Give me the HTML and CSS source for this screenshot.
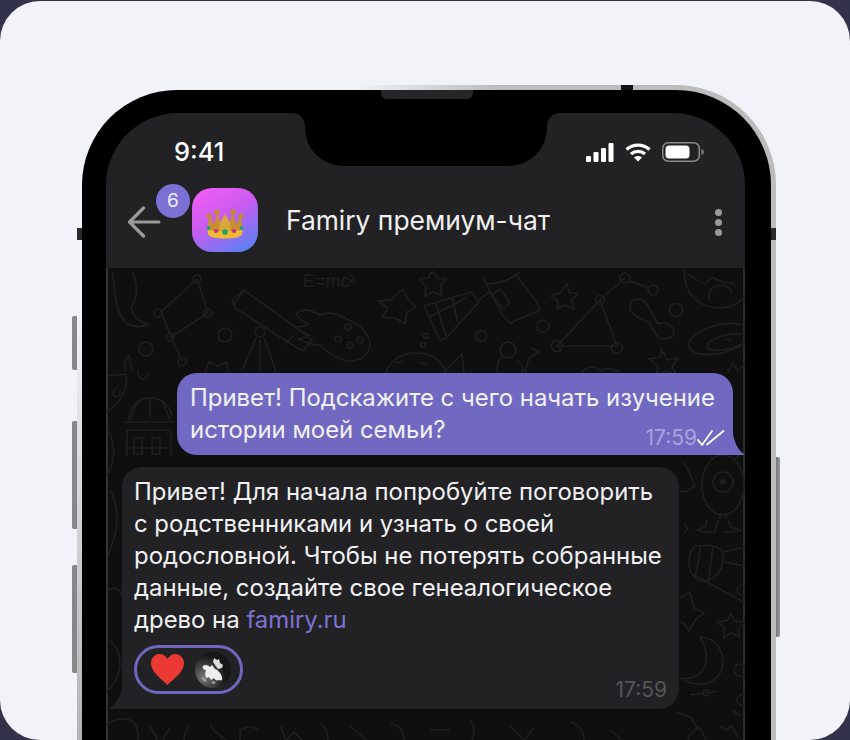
FILE: index.html
```html
<!DOCTYPE html>
<html>
<head>
	<meta charset="utf-8" />
	<title>Famiry</title>
	<link rel="stylesheet" href="styles.css">
</head>
<body>
	<div class="card">
		<div class="phone">
			<i class="tick tick_top"></i>
			<i class="tick tick_left"></i>
			<i class="tick tick_right"></i>
			<i class="side side_l1"></i>
			<i class="side side_l2"></i>
			<i class="side side_l3"></i>
			<i class="side side_r1"></i>
			<i class="speaker"></i>

			<div class="screen">
				<div class="notch"></div>

				<div class="status">
					<span class="clock">9:41</span>
					<div class="status_icons">
						<svg width="28" height="19" viewBox="0 0 28 19" fill="#fff">
							<rect x="0" y="13" width="5" height="6" rx="1.2"/>
							<rect x="7.5" y="9" width="5" height="10" rx="1.2"/>
							<rect x="15" y="5" width="5" height="14" rx="1.2"/>
							<rect x="22.5" y="0" width="5" height="19" rx="1.2"/>
						</svg>
						<svg width="26" height="19" viewBox="0 0 26 19" fill="none" stroke="#fff" stroke-width="3.200">
							<path d="M1.500 6.500C8 .6 18 .6 24.500 6.500"/>
							<path d="M6 11c4-3.600 10-3.600 14 0"/>
							<path d="M13 18.600l-4-4c2.300-2 5.700-2 8 0z" fill="#fff" stroke="none"/>
						</svg>
						<svg width="42" height="20" viewBox="0 0 42 20" fill="none">
							<rect x=".75" y=".75" width="36.500" height="18.500" rx="5.500" stroke="#8a8a8a" stroke-width="1.500"/>
							<rect x="3.500" y="3.500" width="24" height="13" rx="3.500" fill="#fff"/>
							<path d="M39.500 7c1.500.5 2.200 1.600 2.200 3s-.7 2.500-2.200 3z" fill="#8a8a8a"/>
						</svg>
					</div>
				</div>

				<div class="header">
					<svg class="back" width="34" height="32" viewBox="0 0 34 32" fill="none" stroke="#9a9a9a" stroke-width="3.200" stroke-linecap="round" stroke-linejoin="round">
						<path d="M32 16H3M16.500 2L2.500 16l14 14"/>
					</svg>
					<span class="badge">6</span>
					<div class="avatar">
						<svg width="38" height="30" viewBox="0 0 38 30">
							<circle cx="3" cy="7" r="2.600" fill="#c08a35"/>
							<circle cx="11" cy="3" r="2.800" fill="#c08a35"/>
							<circle cx="27" cy="3" r="2.800" fill="#c08a35"/>
							<circle cx="35" cy="7" r="2.600" fill="#c08a35"/>
							<path d="M3 8c3 1 4 5 4.500 9L11 4c1.500 3 2.500 6 3 10l5-9 5 9c.5-4 1.500-7 3-10l3.500 13c.5-4 1.500-8 4.500-9l1.500 15H1.500z" fill="#c98f2c"/>
							<path d="M19 5l5 9 1 10H13l1-10z" fill="#dba63a"/>
							<path d="M1.500 20c5 3.500 30 3.500 35 0l-.7 6c-3 2.500-8 3.500-16.800 3.500S5 28.500 2.200 26z" fill="#efb934"/>
							<circle cx="2.500" cy="19" r="1.900" fill="#1f9e7a"/>
							<circle cx="10" cy="22" r="2.100" fill="#c92f7d"/>
							<circle cx="19" cy="23" r="2.700" fill="#18a05f"/>
							<circle cx="28" cy="22" r="2.100" fill="#c92f7d"/>
							<circle cx="35.500" cy="19" r="1.900" fill="#1f9e7a"/>
						</svg>
					</div>
					<span class="title">Famiry премиум-чат</span>
					<div class="dots"><i></i><i></i><i></i></div>
				</div>

				<div class="chat">
					<svg class="wall" width="639" height="472" viewBox="106 268 639 472" fill="none" stroke="#1f1f21" stroke-width="1.600" stroke-linejoin="round">
						<!-- top left -->
						<path d="M112 272c4 14 1 30 8 42l5 8c4 5 18 6 24 2-10-1-16-8-18-16 5-8 7-18 4-30l-3-6"/>
						<path d="M197 279l-36 33 10 25 11 24M197 279l11 34-37 24"/>
						<circle cx="197" cy="279" r="4"/><circle cx="158" cy="313" r="4"/><circle cx="208" cy="313" r="4"/><circle cx="170" cy="337" r="4"/><circle cx="182" cy="362" r="4"/>
						<circle cx="225" cy="335" r="7"/><circle cx="146" cy="349" r="7"/>
						<path d="M125 372v-12l4-5 3 17M138 370c-1 12 10 12 10 1"/>
						<!-- telescope -->
						<path d="M232 300l12-10 58 42 10 8-9 11-12-7-56-36zM244 290l-10 14M294 335l-10 10"/>
						<circle cx="260" cy="332" r="5"/>
						<path d="M256 338l-14 32M264 338l12 34M260 340v30"/>
						<path d="M205 372l4-10 9 4 8-4 3 10"/>
						<!-- E=mc2 -->
						<text x="303" y="287" font-family="Liberation Sans, sans-serif" font-size="18" fill="#1f1f21" stroke="none">E=mc²</text>
						<!-- comet -->
						<path d="M296 313c10-6 16-2 24 2 8-4 20-1 26 4 12 3 22 14 24 24 0 12-10 19-22 18-10-2-20-8-28-16-8 0-18-4-22-6 6-1 10-2 12-4-6-2-10-4-14-8 6 0 10-1 12-3-4-2-9-4-12-11z"/>
						<circle cx="348" cy="327" r="3"/><circle cx="338" cy="339" r="3"/><circle cx="350" cy="345" r="3"/><circle cx="360" cy="340" r="3"/>
						<!-- stars -->
						<path d="M395 296l8-7 6 12 7 6-9 5-2 12-10-6-13-1 6-9-10-7 13-1z"/>
						<path d="M432 271l6 7 8 1-6 7 2 10-9-4-8 4 1-10-7-7 9-1z"/>
						<!-- alien head -->
						<path d="M386 372c4-12 18-20 32-19 16 1 24 8 28 19"/>
						<path d="M396 363l8-2M418 362l10 2"/>
						<circle cx="423" cy="345" r="2.500"/><circle cx="426" cy="336" r="2.500"/>
						<!-- flask -->
						<path d="M424 306l47-14 8 10-33 36-6 2-16-34zM435 302l11 34M452 297l6 26M428 318l38-20M479 300l10-8"/>
						<!-- capsule -->
						<path d="M483 278l20 38 7 7 30-13 -3-8-22-28M486 284c12 0 24-4 34-12"/>
						<path d="M492 295l8-6 10 14-7 6z"/>
						<circle cx="543" cy="326" r="6"/>
						<circle cx="481" cy="336" r="5.500"/>
						<path d="M567 284l2 8 9 2-7 6 3 9-9-4-8 4 1-8-7-5 9-3z"/>
						<!-- triangle constellation -->
						<path d="M625 278l-25 22-43 46h60l-17-46M629 281l20 7"/>
						<circle cx="625" cy="278" r="5"/><circle cx="653" cy="290" r="5"/><circle cx="600" cy="300" r="4.500"/>
						<circle cx="557" cy="346" r="5.500"/><circle cx="617" cy="348" r="5.500"/>
						<circle cx="676" cy="310" r="6.500"/>
						<path d="M631 302c5-6 14-2 17 4l10 18c6-3 16 1 16 8 0 6-8 8-14 6-6-3-8-10-11-16-6-1-13-5-18-11-2-3-1-6 0-9z"/>
						<path d="M661 348l6 12 11-2-6 9 4 7-11-3-9 6 2-10-9-8 12-2z"/>
						<path d="M582 372c5-6 12-6 18-2 8-2 14-2 20 2"/>
						<circle cx="508" cy="350" r="8"/>
						<path d="M497 372c0-10 2-14 6-16M516 360c5 2 7 6 7 12M531 348l8 4-10 6-4 14"/>
						<path d="M444 372l18-18 2 18"/>
						<!-- planet and spiral -->
						<path d="M684 270c0 24 15 38 36 38 12 0 20-6 25-12M688 274c6 4 10 8 18 10 4-6 6-8 12-4 4 4 12 0 18 6M710 300c-4-6 2-14 8-14 6-2 12 0 14 8"/>
						<path d="M745 326c-14-6-36-1-50 9-10 8-8 17 6 19 14 2 30-2 44-11M745 335c-12-3-24 0-34 6-6 4-4 9 2 9 12 1 24-3 32-8M724 340c3-1 6-1 8 0"/>
						<path d="M728 373l4-10 6 8 7-8"/>
						<!-- left strip -->
						<path d="M108 376l18-2c2 10-2 24-14 34l-6 4M118 388c-4 0-6 4-4 8 4 2 7-2 6-6"/>
						<path d="M128 420c2-14 12-22 22-22 12 0 20 8 22 18M138 400l-8 20M150 398v20M162 400l8 20M124 422h50M127 430h44v26M127 430v26M134 438h8v16h-8zM152 438h8v16h-8zM127 448h44"/>
						<path d="M108 430c4 8 7 20 5 30-2 8-5 14-7 16M110 490c6 10 8 24 6 40-2 10-6 20-8 26"/>
						<path d="M108 590c8-4 14 0 14 8M108 640c8 4 13 14 12 26-2 14-8 22-14 26"/>
						<path d="M106 725c8-6 18-8 26-4 4 2 6 8 6 19M150 726l8 14M170 728l-8 12M190 726c-4 4-6 8-6 14M210 725c4 6 8 10 16 15M240 730c6-4 14-4 18 0M240 740v-10M280 726l6 14 8-8 8 8M320 722c6 6 8 12 8 18M350 726l16 14M390 724c8 0 14 6 14 16M430 730h20M470 720c6 8 4 14 2 20M510 726l14 14 10-12M570 722c8 2 14 8 14 18M610 730l12 10"/>
						<!-- right strip -->
						<ellipse cx="723" cy="485" rx="21" ry="30"/>
						<circle cx="723" cy="482" r="10"/><circle cx="723" cy="482" r="2" fill="#1f1f21"/>
						<path d="M707 520l-2 7-8 3 6 2h12l3-12M728 520l3 7 10 3-5 2h-12M720 513v6M726 513v6M735 460l6-8M712 458l-3-8"/>
						<path d="M684 462l4 8 7 16-8 5-7 1M684 524l4 5-4 4"/>
						<path d="M695 546c12-2 23 0 26 4 4 6 3 18-6 26-6 5-14 7-20 2-6-6-8-18-4-26zM701 545l-6 34M713 546l-5 38"/>
						<path d="M723 552l22-5M725 562l20 4M692 574l52 28"/>
						<path d="M680 598l10-6 4 16 10 5-8 6-7 12-5-8-4-1"/>
						<path d="M731 613l3 8 11 1-7 7 2 8-9-4-8 5 2-10-8-6 11-2z"/>
						<circle cx="742" cy="590" r="5"/>
						<path d="M700 637c10 0 21 8 23 22 1 14-9 26-24 25-8 0-14-2-18-6 10 2 20-2 24-12 3-10 1-20-5-29z"/>
						<circle cx="740" cy="670" r="6"/><circle cx="742" cy="700" r="5"/>
						<path d="M690 695l14-2 14-2"/><circle cx="706" cy="693" r="3"/>
						<path d="M676 712l16 6 6 12M688 740c2-8 8-12 12-12l6 12M720 726l6 4 6-4 6 12M732 710l8 6"/>
					</svg>

					<div class="bubble bubble_out">
						<p>Привет! Подскажите с чего начать изучение</p>
						<p class="short">истории моей семьи?</p>
						<div class="meta">
							<span>17:59</span>
							<svg width="28" height="16" viewBox="0 0 28 16" fill="none" stroke="#fff" stroke-width="1.800" stroke-linecap="round" stroke-linejoin="round">
								<path d="M1 10l4 5L15 1M10 14.500L26.500 1"/>
							</svg>
						</div>
					</div>

					<div class="bubble bubble_in">
						<p>Привет! Для начала попробуйте поговорить<br>с родственниками и узнать о своей<br>родословной. Чтобы не потерять собранные<br>данные, создайте свое генеалогическое<br>древо на <a href="#">famiry.ru</a></p>
						<div class="bubble_foot">
							<div class="reaction">
								<svg width="33" height="31" viewBox="0 0 33 31">
									<path d="M16.500 31C13 27 0 19 0 9 0 4 4 0 8.500 0c3.500 0 6.500 2 8 5 1.500-3 4.500-5 8-5C29 0 33 4 33 9c0 10-13 18-16.500 22z" fill="#ea3a33"/>
								</svg>
								<div class="who">
									<svg width="36" height="36" viewBox="0 0 36 36">
										<path d="M8 14c2-2 5-1 7 1l2-2 3 4c3 1 6 4 7 8 1 3-1 4-3 3-2 1-4 0-5-2l-3 2-2-3-3 1c-1-3-1-6 0-8-2 0-4-2-3-4z" fill="#ededed"/>
										<path d="M19 6l3 2 2-1 1 4 3 2-1 3-4 1-3-4-2-3z" fill="#dcdcdc"/>
										<path d="M6 25l4 1 2 4-4-1zM16 30l3-1 2 2-3 1z" fill="#9a9a9a"/>
									</svg>
								</div>
							</div>
							<span class="time">17:59</span>
						</div>
					</div>
				</div>
			</div>
		</div>
	</div>
</body>
</html>
```

FILE: styles.css
```css
html, body
{
	margin:0;
	padding:0;
	height:740px;
	overflow:hidden;
	background:#32324a;
}
body
{
	font-family:Inter, "Liberation Sans", sans-serif;
	color:#f1f1f4;
}
p
{
	margin:0;
}
i
{
	display:block;
}

.card
{
	height:739px;
	margin-top:1px;
	padding:84px 0 0 77px;
	box-sizing:border-box;
	overflow:hidden;
	border-radius:40px;
	background:#f1f3f9;
}

/* device */
.phone
{
	position:relative;
	width:699px;
	height:760px;
	padding:23px 26px 0 24px;
	box-sizing:border-box;
	border:5px solid transparent;
	border-bottom:0;
	border-radius:100px 100px 0 0;
	background:
		linear-gradient(#000,#000) padding-box,
		linear-gradient(90deg,transparent 40%,#bcbcbc 60%) border-box,
		linear-gradient(180deg,transparent 30%,#b4b4b4 85%) border-box;
}
.tick
{
	position:absolute;
	background:#2a2a2c;
}
.tick_top
{
	top:-5px;
	left:539px;
	width:12px;
	height:5px;
	background:#111;
}
.tick_left
{
	top:138px;
	left:-5px;
	width:5px;
	height:12px;
}
.tick_right
{
	top:138px;
	right:-5px;
	width:5px;
	height:12px;
}
.side
{
	position:absolute;
	width:5px;
	background:#87878a;
	border-radius:2px 0 0 2px;
}
.side_l1
{
	top:226px;
	left:-10px;
	height:54px;
}
.side_l2
{
	top:331px;
	left:-10px;
	height:108px;
}
.side_l3
{
	top:475px;
	left:-10px;
	height:108px;
}
.side_r1
{
	top:367px;
	right:-9px;
	width:4px;
	height:180px;
	background:linear-gradient(90deg,#77777a,#97979a);
	border-radius:0 2px 2px 0;
}
.speaker
{
	position:absolute;
	top:0;
	left:299px;
	width:92px;
	height:9px;
	background:#262628;
	border-radius:0 0 6px 6px;
}

.screen
{
	position:relative;
	height:700px;
	overflow:hidden;
	border-radius:72px 72px 0 0;
	background:#222224;
}
.notch
{
	position:absolute;
	top:0;
	left:199px;
	width:242px;
	height:53px;
	background:#000;
	border-radius:0 0 38px 38px;
}
.notch:before,
.notch:after
{
	content:"";
	position:absolute;
	top:0;
	width:12px;
	height:12px;
}
.notch:before
{
	left:-12px;
	background:radial-gradient(circle at 0 100%,transparent 11.500px,#000 12px);
}
.notch:after
{
	right:-12px;
	background:radial-gradient(circle at 100% 100%,transparent 11.500px,#000 12px);
}

/* status bar */
.status
{
	display:flex;
	justify-content:space-between;
	align-items:center;
	height:76px;
	padding:0 41px 0 68px;
	box-sizing:border-box;
}
.clock
{
	font-size:25.500px;
	font-weight:500;
	color:#fff;
}
.status_icons
{
	display:flex;
	align-items:center;
	gap:11px;
	margin-top:2px;
}

/* chat header */
.header
{
	position:relative;
	display:flex;
	align-items:center;
	height:79px;
	padding:0 0 17px 21px;
	box-sizing:border-box;
}
.back
{
	flex:none;
	margin-top:4px;
}
.badge
{
	position:absolute;
	top:-5px;
	left:50px;
	width:34px;
	height:34px;
	line-height:34px;
	text-align:center;
	font-size:19px;
	border-radius:50%;
	background:#7b70d3;
}
.avatar
{
	display:flex;
	align-items:center;
	justify-content:center;
	flex:none;
	width:66px;
	height:64px;
	margin-left:31px;
	padding-top:8px;
	box-sizing:border-box;
	border-radius:20px;
	background:linear-gradient(150deg,#ee5cf4 10%,#c95cf0 45%,#5f7ff2 90%);
}
.title
{
	margin-left:28px;
	font-size:26.400px;
	color:#f0f0f2;
}
.dots
{
	position:absolute;
	top:20px;
	right:23px;
}
.dots i
{
	width:7px;
	height:7px;
	margin-bottom:3px;
	border-radius:50%;
	background:#9a9a9a;
}

/* messages */
.chat
{
	position:relative;
	height:472px;
	padding:105px 0 0 2px;
	box-sizing:border-box;
	background:#0f0f10;
	box-shadow:inset 2px 0 #333335, inset -2px 0 #2c2c2e;
}
.wall
{
	position:absolute;
	top:0;
	left:0;
}
.bubble
{
	position:relative;
	box-sizing:border-box;
	font-size:23.900px;
	line-height:32px;
}
.bubble_out
{
	width:556px;
	height:82px;
	margin-left:69px;
	padding:9px 14px 0 13px;
	border-radius:20px 20px 0 20px;
	background:#7168c2;
}
.bubble_out:after
{
	content:"";
	position:absolute;
	right:-12px;
	bottom:0;
	width:12px;
	height:22px;
	background:#7168c2;
	clip-path:path("M0 0C1 10 6 18 12 22H0Z");
}
.short
{
	width:fit-content;
}
.meta
{
	position:absolute;
	right:8px;
	bottom:4px;
	display:flex;
	align-items:center;
	font-size:21px;
	line-height:26px;
	color:#a9a3de;
}
.bubble_in
{
	width:557px;
	height:242px;
	margin:12px 0 0 14px;
	padding:9px 12px 0 12px;
	border-radius:20px 20px 20px 0;
	background:#222224;
}
.bubble_in:after
{
	content:"";
	position:absolute;
	left:-14px;
	bottom:0;
	width:14px;
	height:22px;
	background:#222224;
	clip-path:path("M14 0C13 10 7 18 0 22H14Z");
}
.bubble_in a
{
	color:#7d73d6;
	text-decoration:none;
}
.bubble_foot
{
	display:flex;
	justify-content:space-between;
	align-items:flex-end;
	margin-top:9px;
}
.reaction
{
	display:flex;
	align-items:center;
	gap:11px;
	width:109px;
	height:49px;
	padding-left:14px;
	box-sizing:border-box;
	border:3px solid #6f66c0;
	border-radius:25px;
}
.who
{
	width:36px;
	height:36px;
	border-radius:50%;
	background:radial-gradient(circle at 25% 70%,#77777a,#161618 60%);
}
.time
{
	margin-bottom:-9px;
	font-size:21px;
	line-height:26px;
	color:#55555a;
}
```
